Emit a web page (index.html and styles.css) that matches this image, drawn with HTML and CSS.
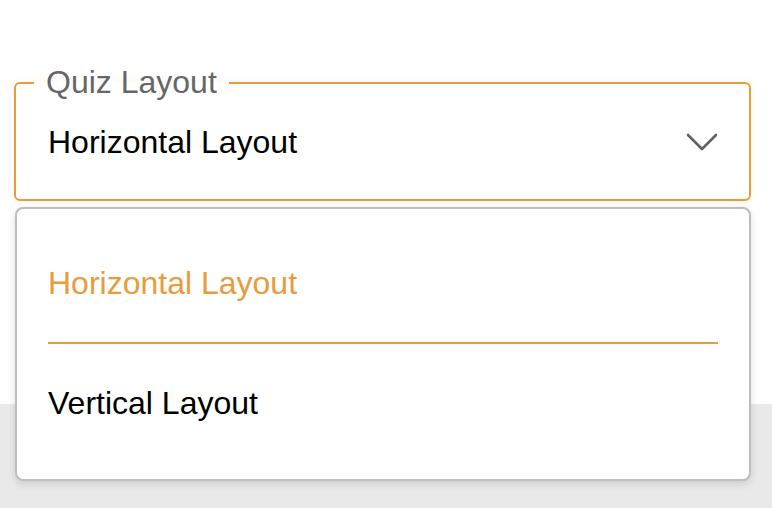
FILE: index.html
```html
<!DOCTYPE html>
<html lang="en">
<head>
<meta charset="utf-8">
<title>Quiz Layout</title>
<link rel="stylesheet" href="styles.css">
</head>
<body>
<div class="page">
  <div class="panel">
    <fieldset class="field">
      <legend class="field-label">Quiz Layout</legend>
      <div class="field-row">
        <span class="field-value">Horizontal Layout</span>
        <svg class="chevron" width="32" height="18" viewBox="0 0 32 18" aria-hidden="true">
          <path d="M2 2 L16 16 L30 2" fill="none" stroke="#5d6069" stroke-width="2.6" stroke-linecap="round" stroke-linejoin="round"/>
        </svg>
      </div>
    </fieldset>
    <ul class="menu">
      <li class="menu-item selected">Horizontal Layout</li>
      <li class="menu-item">Vertical Layout</li>
    </ul>
  </div>
  <div class="footer"></div>
</div>
</body>
</html>
```
FILE: styles.css
```css
* { box-sizing: border-box; }
html, body {
  margin: 0;
  padding: 0;
  width: 772px;
  height: 508px;
  overflow: hidden;
  font-family: "Liberation Sans", Arial, sans-serif;
}
.page {
  display: flex;
  flex-direction: column;
  height: 508px;
  position: relative;
}
.panel {
  height: 404px;
  background: #ffffff;
  padding: 64px 21px 0 14px;
}
.footer {
  flex: 1;
  background: #e9e9e9;
}
.field {
  margin: 0;
  padding: 0 0 0 18px;
  border: 2px solid #e99b3c;
  border-radius: 6px;
  box-shadow: 0 0 10px rgba(233, 155, 60, 0.10);
  min-width: 0;
}
.field-label {
  padding: 0 12px 2px;
  font-size: 32px;
  line-height: 36px;
  color: #666666;
}
.field-row {
  display: flex;
  align-items: center;
  justify-content: space-between;
  padding: 22px 31px 39px 14px;
}
.field-value {
  font-size: 32px;
  line-height: 36px;
  color: #000000;
}
.chevron { display: block; }
.menu {
  position: absolute;
  top: 207px;
  left: 15px;
  width: 736px;
  height: 274px;
  margin: 0;
  list-style: none;
  padding: 15px 31px 17px;
  background: #ffffff;
  border: 2px solid #bdbdbd;
  border-radius: 8px;
  box-shadow: 0 3px 8px rgba(0, 0, 0, 0.12);
}
.menu-item {
  font-size: 32px;
  line-height: 36px;
  padding: 41px 0;
  color: #000000;
}
.menu-item.selected {
  color: #e99b3c;
  border-bottom: 2px solid #e99b3c;
}
```
